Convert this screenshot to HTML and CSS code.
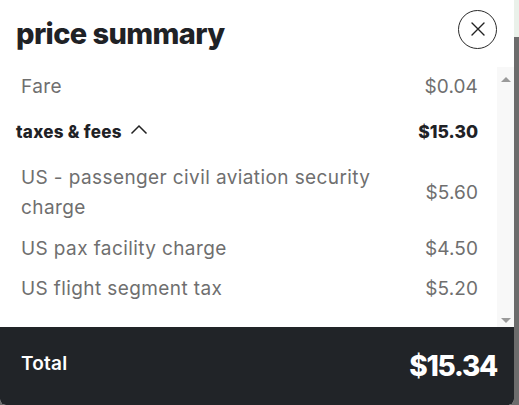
FILE: index.html
```html
<!DOCTYPE html>
<html lang="en">
<head>
<meta charset="utf-8">
<title>price summary</title>
<link rel="stylesheet" href="styles.css">
</head>
<body>
<div class="dialog">
  <header class="head">
    <h1 class="title">price summary</h1>
    <button class="close" aria-label="close">
      <svg width="16" height="16" viewBox="0 0 16 16"><path d="M2 2 L14 14 M14 2 L2 14" stroke="#222" stroke-width="1.4" fill="none" stroke-linecap="round"/></svg>
    </button>
  </header>
  <div class="body">
    <div class="list">
      <div class="row">
        <span class="label">Fare</span>
        <span class="amt">$0.04</span>
      </div>
      <div class="row group">
        <span class="glabel">taxes &amp; fees
          <svg class="chev" width="18" height="11" viewBox="0 0 18 11"><path d="M1.5 9.5 L9 2 L16.5 9.5" stroke="#222" stroke-width="1.5" fill="none"/></svg>
        </span>
        <span class="gamt">$15.30</span>
      </div>
      <div class="row tall">
        <span class="label">US - passenger civil aviation security charge</span>
        <span class="amt">$5.60</span>
      </div>
      <div class="row">
        <span class="label">US pax facility charge</span>
        <span class="amt">$4.50</span>
      </div>
      <div class="row">
        <span class="label">US flight segment tax</span>
        <span class="amt">$5.20</span>
      </div>
    </div>
    <div class="scrollbar">
      <span class="arrow up"></span>
      <span class="arrow down"></span>
    </div>
  </div>
  <footer class="foot">
    <span class="total-label">Total</span>
    <span class="total-amt">$15.34</span>
  </footer>
</div>
</body>
</html>
```

FILE: styles.css
```css
html, body {
  margin: 0;
  padding: 0;
}
body {
  width: 519px;
  height: 405px;
  overflow: hidden;
  background: linear-gradient(to bottom, #eaf1ea 0, #eaf1ea 37px, #6c6c6c 37px);
  font-family: "Inter", "Lato", sans-serif;
}
.dialog {
  width: 514px;
  height: 405px;
  background: #fff;
  display: flex;
  flex-direction: column;
  border-radius: 0 0 6px 6px;
  overflow: hidden;
}
.head {
  height: 67px;
  flex: none;
  display: flex;
  align-items: center;
  justify-content: space-between;
  padding: 0 17px 0 16px;
  box-sizing: border-box;
}
.title {
  margin: 0;
  font-size: 29px;
  font-weight: 800;
  color: #1f2226;
  letter-spacing: -0.6px;
}
.close {
  width: 39px;
  height: 39px;
  margin-top: -9px;
  border: 1px solid #2a2a2a;
  border-radius: 50%;
  background: #fff;
  padding: 0;
  display: flex;
  align-items: center;
  justify-content: center;
}
.body {
  height: 260px;
  flex: none;
  display: flex;
}
.list {
  flex: 1;
  padding: 0 19px 0 21px;
}
.row {
  display: flex;
  justify-content: space-between;
  align-items: center;
  padding: 5px 0;
  line-height: 30px;
}
.row.tall {
  padding: 6px 0;
}
.label {
  font-size: 19px;
  color: #6f6f6f;
  max-width: 370px;
  letter-spacing: 0.4px;
}
.amt {
  font-size: 19px;
  color: #6f6f6f;
  letter-spacing: 0.1px;
}
.group {
  height: 50px;
  padding: 0;
  margin-left: -5px;
  box-sizing: border-box;
}
.glabel {
  font-size: 17px;
  font-weight: 800;
  color: #1f2226;
  display: flex;
  align-items: center;
  gap: 8px;
  letter-spacing: 0.3px;
}
.chev {
  margin-top: -5px;
}
.gamt {
  font-size: 17.5px;
  font-weight: 800;
  color: #1f2226;
}
.scrollbar {
  width: 17px;
  flex: none;
  background: #f8f8f8;
  display: flex;
  flex-direction: column;
  justify-content: space-between;
  align-items: center;
  padding: 10px 0 4px;
  box-sizing: border-box;
}
.arrow {
  width: 0;
  height: 0;
  border-left: 5px solid transparent;
  border-right: 5px solid transparent;
}
.arrow.up {
  border-bottom: 5px solid #9a9a9a;
}
.arrow.down {
  border-top: 5px solid #9a9a9a;
}
.foot {
  flex: 1;
  background: #212428;
  display: flex;
  justify-content: space-between;
  align-items: center;
  padding: 0 17px 0 21px;
  color: #fff;
}
.total-label {
  font-size: 19px;
  font-weight: 600;
  margin-top: -6px;
  letter-spacing: 0.2px;
}
.total-amt {
  font-size: 28px;
  font-weight: 800;
  letter-spacing: -1.3px;
}
```
